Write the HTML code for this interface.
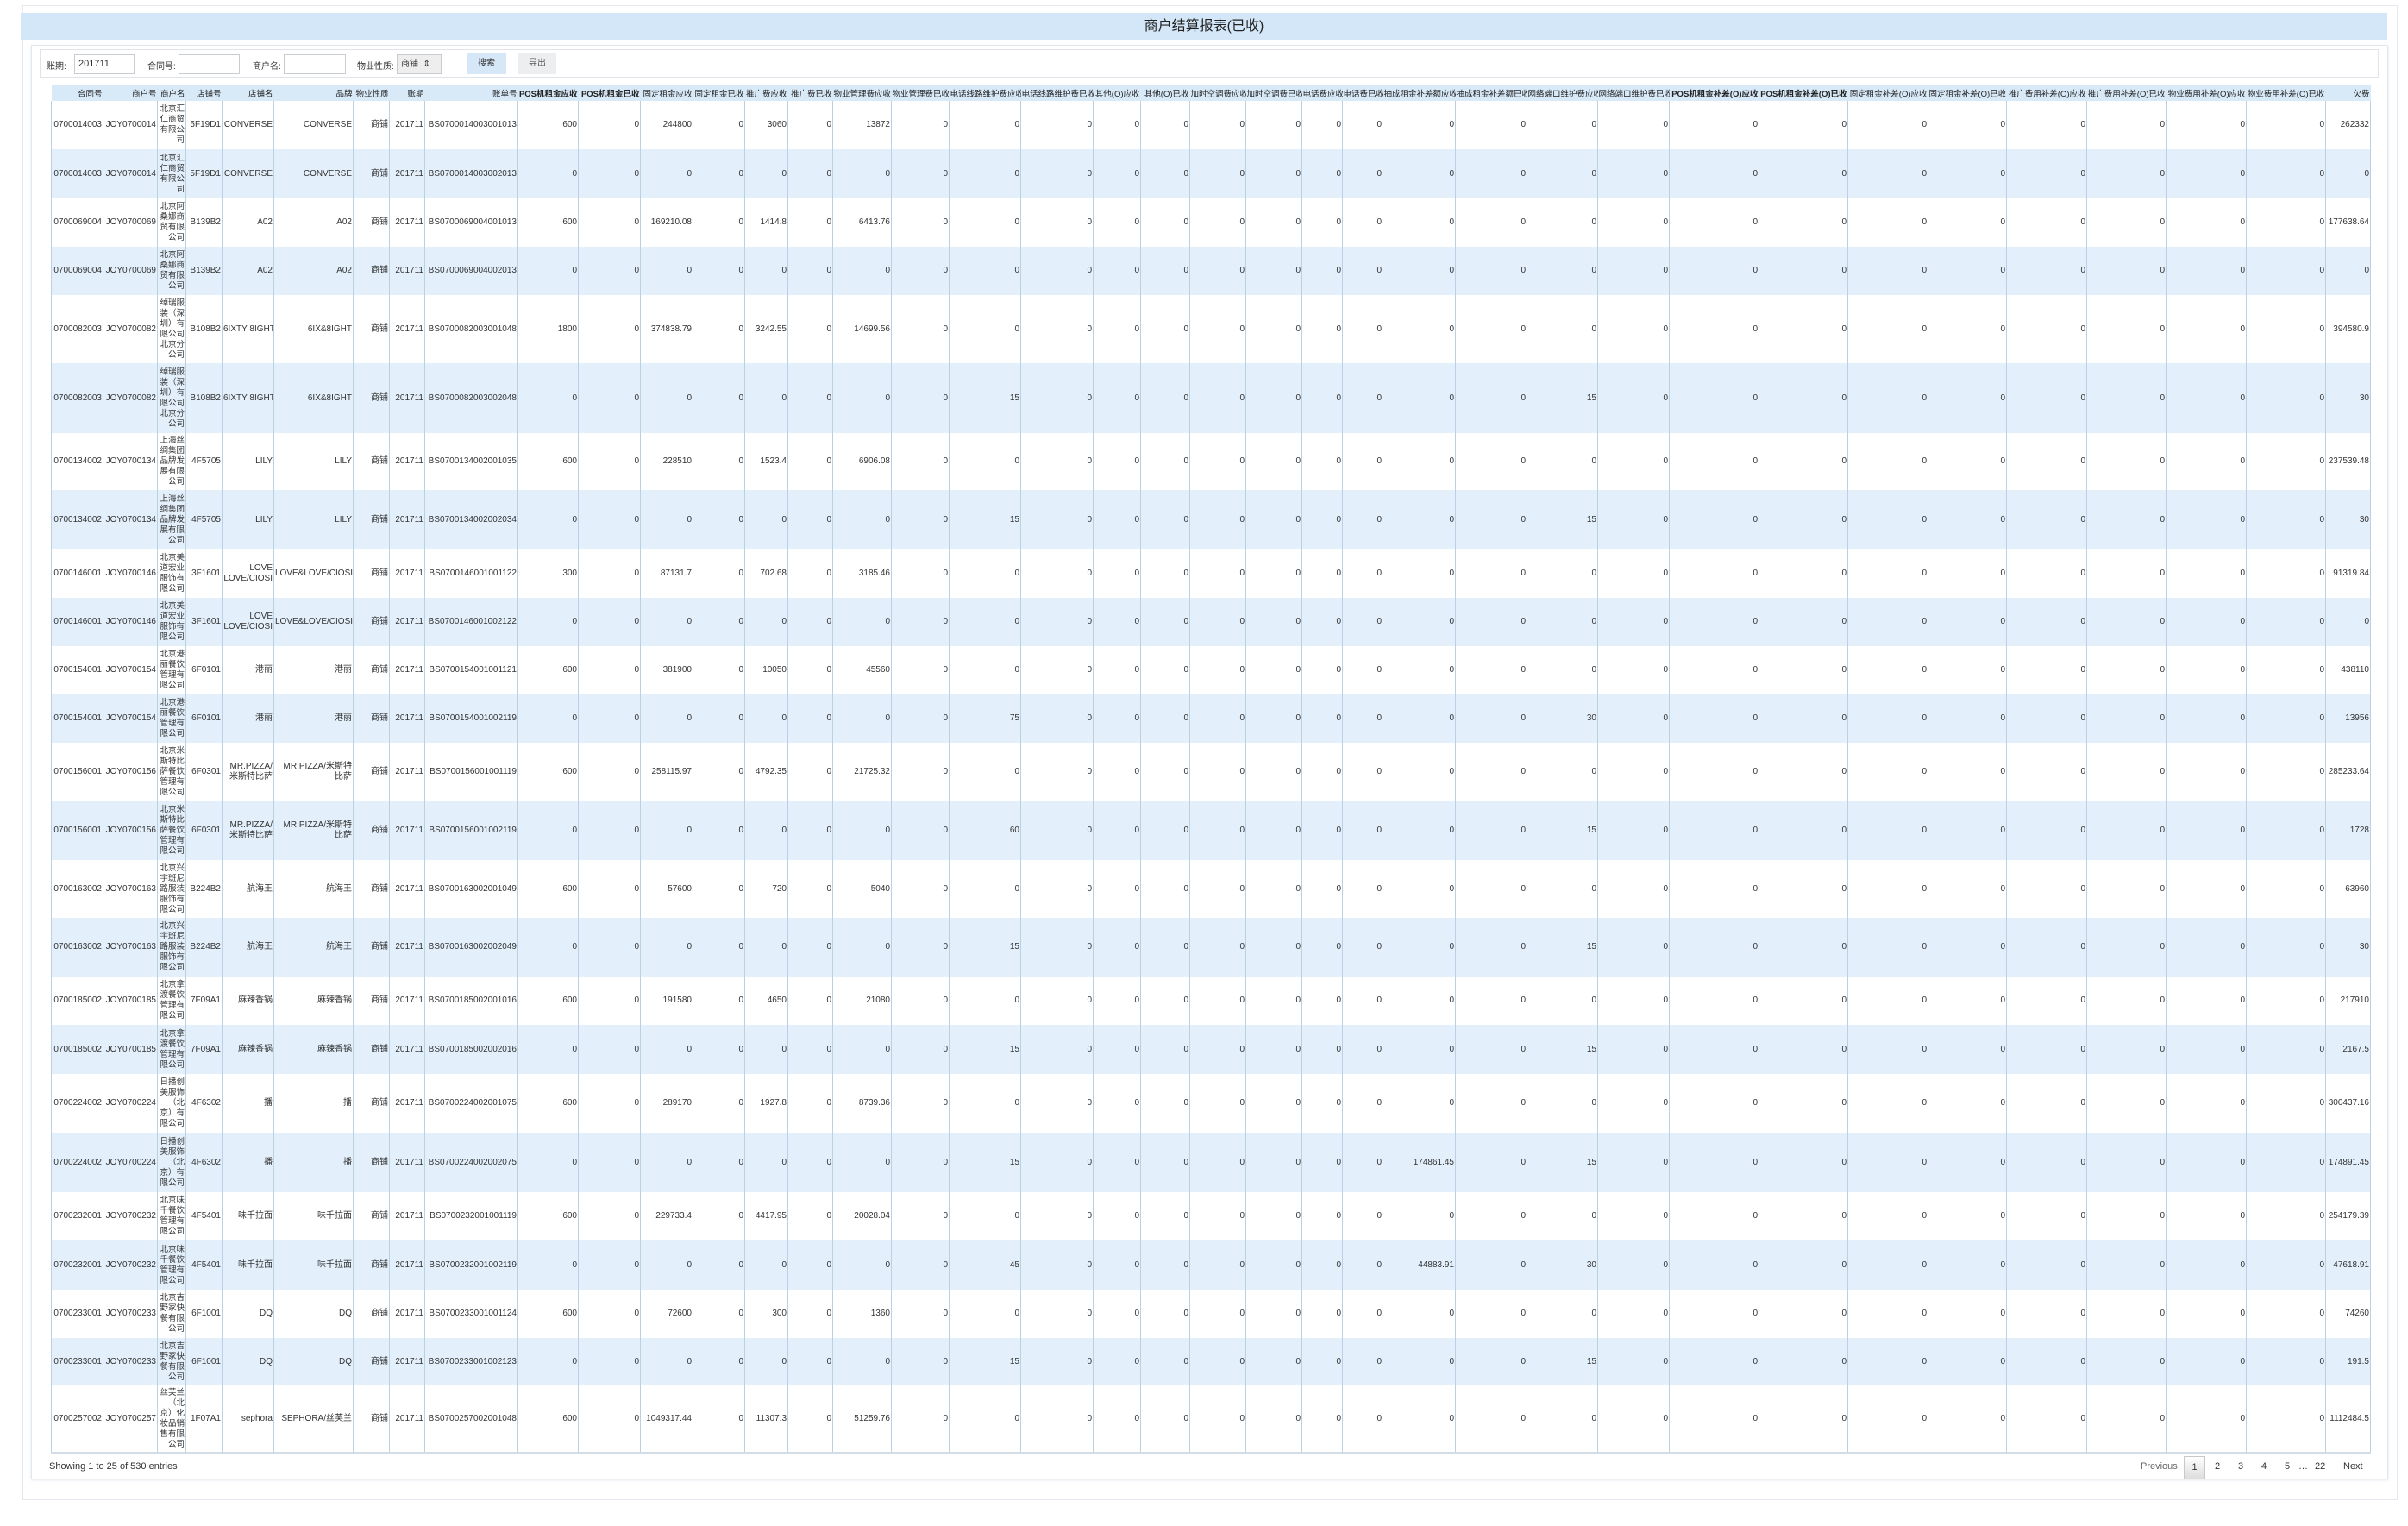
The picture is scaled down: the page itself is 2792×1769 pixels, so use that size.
<!DOCTYPE html>
<html><head><meta charset="utf-8"><style>
*{box-sizing:border-box;margin:0;padding:0}
body{width:2792px;height:1769px;background:#fff;font-family:"Liberation Sans","Noto Sans CJK SC",sans-serif;color:#333;position:relative;overflow:hidden}
.outer{position:absolute;left:26px;top:6px;width:2754px;height:1733px;border:1px solid #e4e9ef;background:#fff}
.title{position:absolute;left:24px;top:15px;width:2744px;height:31px;background:#d4e7f8;text-align:center;font-size:16px;line-height:31px;color:#222}
.inner{position:absolute;left:36px;top:52px;width:2733px;height:1663px;border:1px solid #e2e7ee;box-shadow:0 1px 3px #e4e8ee;background:#fff}
.filter{position:absolute;left:46px;top:57px;width:2712px;height:33px;border:1px solid #e0e4ea;background:#fff;font-size:10px}
.filter span,.filter div{position:absolute}
.inp{border:1px solid #c9ccd0;height:23px;top:5px;background:#fff;font-size:11px;line-height:21px;padding-left:4px}
.btn{top:4px;height:24px;line-height:24px;text-align:center;font-size:10px}
table{position:absolute;left:59px;top:98px;width:2689px;border-collapse:collapse;table-layout:fixed;font-size:10px}
th{height:19px;background:#d8e9f8;font-weight:normal;text-align:right;white-space:nowrap;overflow:hidden;padding:0 1px;font-size:9.5px;color:#222}
th.b{font-weight:bold}
td{text-align:right;padding:0 1px;border-left:1px solid #bcd0e3;border-right:1px solid #bcd0e3;white-space:nowrap;overflow:hidden;line-height:12px}
td.n{white-space:normal;word-break:break-all;font-size:9.5px;padding:0 1px}
td.w{white-space:normal}
tr.e td{background:#e3f0fc}
tbody tr:last-child td{border-bottom:2px solid #d4dde6}
.show{position:absolute;left:57px;top:1694px;font-size:11px}
.pg{position:absolute;top:1694px;font-size:11px;color:#333}
.cur{position:absolute;left:2532px;top:1688px;width:25px;height:27px;border:1px solid #c8c8c8;background:linear-gradient(#fff,#ddd);text-align:center;line-height:25px;font-size:11px}
</style></head><body>
<div class="outer"></div>
<div class="title">商户结算报表(已收)</div>
<div class="inner"></div>
<div class="filter">
<span style="left:7px;top:10px">账期:</span><div class="inp" style="left:39px;width:70px">201711</div>
<span style="left:124px;top:10px">合同号:</span><div class="inp" style="left:160px;width:71px"></div>
<span style="left:246px;top:10px">商户名:</span><div class="inp" style="left:282px;width:72px"></div>
<span style="left:367px;top:10px">物业性质:</span><div class="inp" style="left:413px;width:52px;background:#eee;font-size:10px">商铺 &nbsp;⇕</div>
<div class="btn" style="left:494px;width:46px;background:#d6e8f8">搜索</div>
<div class="btn" style="left:554px;width:44px;background:#eceeef;color:#555">导出</div>
</div>
<table>
<colgroup><col style="width:60px"><col style="width:63px"><col style="width:33px"><col style="width:42px"><col style="width:60px"><col style="width:92px"><col style="width:42px"><col style="width:41px"><col style="width:108px"><col style="width:70px"><col style="width:72px"><col style="width:61px"><col style="width:60px"><col style="width:50px"><col style="width:52px"><col style="width:68px"><col style="width:67px"><col style="width:83px"><col style="width:84px"><col style="width:55px"><col style="width:57px"><col style="width:65px"><col style="width:65px"><col style="width:47px"><col style="width:47px"><col style="width:84px"><col style="width:83px"><col style="width:82px"><col style="width:83px"><col style="width:104px"><col style="width:103px"><col style="width:93px"><col style="width:91px"><col style="width:93px"><col style="width:92px"><col style="width:93px"><col style="width:92px"><col style="width:52px"></colgroup>
<thead><tr><th>合同号</th><th>商户号</th><th>商户名</th><th>店铺号</th><th>店铺名</th><th>品牌</th><th>物业性质</th><th>账期</th><th>账单号</th><th class="b">POS机租金应收</th><th class="b">POS机租金已收</th><th>固定租金应收</th><th>固定租金已收</th><th>推广费应收</th><th>推广费已收</th><th>物业管理费应收</th><th>物业管理费已收</th><th>电话线路维护费应收</th><th>电话线路维护费已收</th><th>其他(O)应收</th><th>其他(O)已收</th><th>加时空调费应收</th><th>加时空调费已收</th><th>电话费应收</th><th>电话费已收</th><th>抽成租金补差额应收</th><th>抽成租金补差额已收</th><th>网络端口维护费应收</th><th>网络端口维护费已收</th><th class="b">POS机租金补差(O)应收</th><th class="b">POS机租金补差(O)已收</th><th>固定租金补差(O)应收</th><th>固定租金补差(O)已收</th><th>推广费用补差(O)应收</th><th>推广费用补差(O)已收</th><th>物业费用补差(O)应收</th><th>物业费用补差(O)已收</th><th>欠费</th></tr></thead>
<tbody>
<tr style="height:56px"><td>0700014003</td><td>JOY0700014</td><td class="n">北京汇仁商贸有限公司</td><td>5F19D1</td><td>CONVERSE</td><td>CONVERSE</td><td>商铺</td><td>201711</td><td>BS0700014003001013</td><td>600</td><td>0</td><td>244800</td><td>0</td><td>3060</td><td>0</td><td>13872</td><td>0</td><td>0</td><td>0</td><td>0</td><td>0</td><td>0</td><td>0</td><td>0</td><td>0</td><td>0</td><td>0</td><td>0</td><td>0</td><td>0</td><td>0</td><td>0</td><td>0</td><td>0</td><td>0</td><td>0</td><td>0</td><td>262332</td></tr>
<tr class="e" style="height:57px"><td>0700014003</td><td>JOY0700014</td><td class="n">北京汇仁商贸有限公司</td><td>5F19D1</td><td>CONVERSE</td><td>CONVERSE</td><td>商铺</td><td>201711</td><td>BS0700014003002013</td><td>0</td><td>0</td><td>0</td><td>0</td><td>0</td><td>0</td><td>0</td><td>0</td><td>0</td><td>0</td><td>0</td><td>0</td><td>0</td><td>0</td><td>0</td><td>0</td><td>0</td><td>0</td><td>0</td><td>0</td><td>0</td><td>0</td><td>0</td><td>0</td><td>0</td><td>0</td><td>0</td><td>0</td><td>0</td></tr>
<tr style="height:56px"><td>0700069004</td><td>JOY0700069</td><td class="n">北京阿桑娜商贸有限公司</td><td>B139B2</td><td>A02</td><td>A02</td><td>商铺</td><td>201711</td><td>BS0700069004001013</td><td>600</td><td>0</td><td>169210.08</td><td>0</td><td>1414.8</td><td>0</td><td>6413.76</td><td>0</td><td>0</td><td>0</td><td>0</td><td>0</td><td>0</td><td>0</td><td>0</td><td>0</td><td>0</td><td>0</td><td>0</td><td>0</td><td>0</td><td>0</td><td>0</td><td>0</td><td>0</td><td>0</td><td>0</td><td>0</td><td>177638.64</td></tr>
<tr class="e" style="height:56px"><td>0700069004</td><td>JOY0700069</td><td class="n">北京阿桑娜商贸有限公司</td><td>B139B2</td><td>A02</td><td>A02</td><td>商铺</td><td>201711</td><td>BS0700069004002013</td><td>0</td><td>0</td><td>0</td><td>0</td><td>0</td><td>0</td><td>0</td><td>0</td><td>0</td><td>0</td><td>0</td><td>0</td><td>0</td><td>0</td><td>0</td><td>0</td><td>0</td><td>0</td><td>0</td><td>0</td><td>0</td><td>0</td><td>0</td><td>0</td><td>0</td><td>0</td><td>0</td><td>0</td><td>0</td></tr>
<tr style="height:79px"><td>0700082003</td><td>JOY0700082</td><td class="n">绰瑞服装（深圳）有限公司北京分公司</td><td>B108B2</td><td>6IXTY 8IGHT</td><td>6IX&amp;8IGHT</td><td>商铺</td><td>201711</td><td>BS0700082003001048</td><td>1800</td><td>0</td><td>374838.79</td><td>0</td><td>3242.55</td><td>0</td><td>14699.56</td><td>0</td><td>0</td><td>0</td><td>0</td><td>0</td><td>0</td><td>0</td><td>0</td><td>0</td><td>0</td><td>0</td><td>0</td><td>0</td><td>0</td><td>0</td><td>0</td><td>0</td><td>0</td><td>0</td><td>0</td><td>0</td><td>394580.9</td></tr>
<tr class="e" style="height:81px"><td>0700082003</td><td>JOY0700082</td><td class="n">绰瑞服装（深圳）有限公司北京分公司</td><td>B108B2</td><td>6IXTY 8IGHT</td><td>6IX&amp;8IGHT</td><td>商铺</td><td>201711</td><td>BS0700082003002048</td><td>0</td><td>0</td><td>0</td><td>0</td><td>0</td><td>0</td><td>0</td><td>0</td><td>15</td><td>0</td><td>0</td><td>0</td><td>0</td><td>0</td><td>0</td><td>0</td><td>0</td><td>0</td><td>15</td><td>0</td><td>0</td><td>0</td><td>0</td><td>0</td><td>0</td><td>0</td><td>0</td><td>0</td><td>30</td></tr>
<tr style="height:66px"><td>0700134002</td><td>JOY0700134</td><td class="n">上海丝绸集团品牌发展有限公司</td><td>4F5705</td><td>LILY</td><td>LILY</td><td>商铺</td><td>201711</td><td>BS0700134002001035</td><td>600</td><td>0</td><td>228510</td><td>0</td><td>1523.4</td><td>0</td><td>6906.08</td><td>0</td><td>0</td><td>0</td><td>0</td><td>0</td><td>0</td><td>0</td><td>0</td><td>0</td><td>0</td><td>0</td><td>0</td><td>0</td><td>0</td><td>0</td><td>0</td><td>0</td><td>0</td><td>0</td><td>0</td><td>0</td><td>237539.48</td></tr>
<tr class="e" style="height:69px"><td>0700134002</td><td>JOY0700134</td><td class="n">上海丝绸集团品牌发展有限公司</td><td>4F5705</td><td>LILY</td><td>LILY</td><td>商铺</td><td>201711</td><td>BS0700134002002034</td><td>0</td><td>0</td><td>0</td><td>0</td><td>0</td><td>0</td><td>0</td><td>0</td><td>15</td><td>0</td><td>0</td><td>0</td><td>0</td><td>0</td><td>0</td><td>0</td><td>0</td><td>0</td><td>15</td><td>0</td><td>0</td><td>0</td><td>0</td><td>0</td><td>0</td><td>0</td><td>0</td><td>0</td><td>30</td></tr>
<tr style="height:56px"><td>0700146001</td><td>JOY0700146</td><td class="n">北京美道宏业服饰有限公司</td><td>3F1601</td><td class="w">LOVE LOVE/CIOSI</td><td>LOVE&amp;LOVE/CIOSI</td><td>商铺</td><td>201711</td><td>BS0700146001001122</td><td>300</td><td>0</td><td>87131.7</td><td>0</td><td>702.68</td><td>0</td><td>3185.46</td><td>0</td><td>0</td><td>0</td><td>0</td><td>0</td><td>0</td><td>0</td><td>0</td><td>0</td><td>0</td><td>0</td><td>0</td><td>0</td><td>0</td><td>0</td><td>0</td><td>0</td><td>0</td><td>0</td><td>0</td><td>0</td><td>91319.84</td></tr>
<tr class="e" style="height:56px"><td>0700146001</td><td>JOY0700146</td><td class="n">北京美道宏业服饰有限公司</td><td>3F1601</td><td class="w">LOVE LOVE/CIOSI</td><td>LOVE&amp;LOVE/CIOSI</td><td>商铺</td><td>201711</td><td>BS0700146001002122</td><td>0</td><td>0</td><td>0</td><td>0</td><td>0</td><td>0</td><td>0</td><td>0</td><td>0</td><td>0</td><td>0</td><td>0</td><td>0</td><td>0</td><td>0</td><td>0</td><td>0</td><td>0</td><td>0</td><td>0</td><td>0</td><td>0</td><td>0</td><td>0</td><td>0</td><td>0</td><td>0</td><td>0</td><td>0</td></tr>
<tr style="height:56px"><td>0700154001</td><td>JOY0700154</td><td class="n">北京港丽餐饮管理有限公司</td><td>6F0101</td><td>港丽</td><td>港丽</td><td>商铺</td><td>201711</td><td>BS0700154001001121</td><td>600</td><td>0</td><td>381900</td><td>0</td><td>10050</td><td>0</td><td>45560</td><td>0</td><td>0</td><td>0</td><td>0</td><td>0</td><td>0</td><td>0</td><td>0</td><td>0</td><td>0</td><td>0</td><td>0</td><td>0</td><td>0</td><td>0</td><td>0</td><td>0</td><td>0</td><td>0</td><td>0</td><td>0</td><td>438110</td></tr>
<tr class="e" style="height:56px"><td>0700154001</td><td>JOY0700154</td><td class="n">北京港丽餐饮管理有限公司</td><td>6F0101</td><td>港丽</td><td>港丽</td><td>商铺</td><td>201711</td><td>BS0700154001002119</td><td>0</td><td>0</td><td>0</td><td>0</td><td>0</td><td>0</td><td>0</td><td>0</td><td>75</td><td>0</td><td>0</td><td>0</td><td>0</td><td>0</td><td>0</td><td>0</td><td>0</td><td>0</td><td>30</td><td>0</td><td>0</td><td>0</td><td>0</td><td>0</td><td>0</td><td>0</td><td>0</td><td>0</td><td>13956</td></tr>
<tr style="height:67px"><td>0700156001</td><td>JOY0700156</td><td class="n">北京米斯特比萨餐饮管理有限公司</td><td>6F0301</td><td class="w">MR.PIZZA/米斯特比萨</td><td class="w">MR.PIZZA/米斯特比萨</td><td>商铺</td><td>201711</td><td>BS0700156001001119</td><td>600</td><td>0</td><td>258115.97</td><td>0</td><td>4792.35</td><td>0</td><td>21725.32</td><td>0</td><td>0</td><td>0</td><td>0</td><td>0</td><td>0</td><td>0</td><td>0</td><td>0</td><td>0</td><td>0</td><td>0</td><td>0</td><td>0</td><td>0</td><td>0</td><td>0</td><td>0</td><td>0</td><td>0</td><td>0</td><td>285233.64</td></tr>
<tr class="e" style="height:69px"><td>0700156001</td><td>JOY0700156</td><td class="n">北京米斯特比萨餐饮管理有限公司</td><td>6F0301</td><td class="w">MR.PIZZA/米斯特比萨</td><td class="w">MR.PIZZA/米斯特比萨</td><td>商铺</td><td>201711</td><td>BS0700156001002119</td><td>0</td><td>0</td><td>0</td><td>0</td><td>0</td><td>0</td><td>0</td><td>0</td><td>60</td><td>0</td><td>0</td><td>0</td><td>0</td><td>0</td><td>0</td><td>0</td><td>0</td><td>0</td><td>15</td><td>0</td><td>0</td><td>0</td><td>0</td><td>0</td><td>0</td><td>0</td><td>0</td><td>0</td><td>1728</td></tr>
<tr style="height:67px"><td>0700163002</td><td>JOY0700163</td><td class="n">北京兴宇斑尼路服装服饰有限公司</td><td>B224B2</td><td>航海王</td><td>航海王</td><td>商铺</td><td>201711</td><td>BS0700163002001049</td><td>600</td><td>0</td><td>57600</td><td>0</td><td>720</td><td>0</td><td>5040</td><td>0</td><td>0</td><td>0</td><td>0</td><td>0</td><td>0</td><td>0</td><td>0</td><td>0</td><td>0</td><td>0</td><td>0</td><td>0</td><td>0</td><td>0</td><td>0</td><td>0</td><td>0</td><td>0</td><td>0</td><td>0</td><td>63960</td></tr>
<tr class="e" style="height:68px"><td>0700163002</td><td>JOY0700163</td><td class="n">北京兴宇斑尼路服装服饰有限公司</td><td>B224B2</td><td>航海王</td><td>航海王</td><td>商铺</td><td>201711</td><td>BS0700163002002049</td><td>0</td><td>0</td><td>0</td><td>0</td><td>0</td><td>0</td><td>0</td><td>0</td><td>15</td><td>0</td><td>0</td><td>0</td><td>0</td><td>0</td><td>0</td><td>0</td><td>0</td><td>0</td><td>15</td><td>0</td><td>0</td><td>0</td><td>0</td><td>0</td><td>0</td><td>0</td><td>0</td><td>0</td><td>30</td></tr>
<tr style="height:56px"><td>0700185002</td><td>JOY0700185</td><td class="n">北京拿渡餐饮管理有限公司</td><td>7F09A1</td><td>麻辣香锅</td><td>麻辣香锅</td><td>商铺</td><td>201711</td><td>BS0700185002001016</td><td>600</td><td>0</td><td>191580</td><td>0</td><td>4650</td><td>0</td><td>21080</td><td>0</td><td>0</td><td>0</td><td>0</td><td>0</td><td>0</td><td>0</td><td>0</td><td>0</td><td>0</td><td>0</td><td>0</td><td>0</td><td>0</td><td>0</td><td>0</td><td>0</td><td>0</td><td>0</td><td>0</td><td>0</td><td>217910</td></tr>
<tr class="e" style="height:57px"><td>0700185002</td><td>JOY0700185</td><td class="n">北京拿渡餐饮管理有限公司</td><td>7F09A1</td><td>麻辣香锅</td><td>麻辣香锅</td><td>商铺</td><td>201711</td><td>BS0700185002002016</td><td>0</td><td>0</td><td>0</td><td>0</td><td>0</td><td>0</td><td>0</td><td>0</td><td>15</td><td>0</td><td>0</td><td>0</td><td>0</td><td>0</td><td>0</td><td>0</td><td>0</td><td>0</td><td>15</td><td>0</td><td>0</td><td>0</td><td>0</td><td>0</td><td>0</td><td>0</td><td>0</td><td>0</td><td>2167.5</td></tr>
<tr style="height:68px"><td>0700224002</td><td>JOY0700224</td><td class="n">日播创美服饰（北京）有限公司</td><td>4F6302</td><td>播</td><td>播</td><td>商铺</td><td>201711</td><td>BS0700224002001075</td><td>600</td><td>0</td><td>289170</td><td>0</td><td>1927.8</td><td>0</td><td>8739.36</td><td>0</td><td>0</td><td>0</td><td>0</td><td>0</td><td>0</td><td>0</td><td>0</td><td>0</td><td>0</td><td>0</td><td>0</td><td>0</td><td>0</td><td>0</td><td>0</td><td>0</td><td>0</td><td>0</td><td>0</td><td>0</td><td>300437.16</td></tr>
<tr class="e" style="height:69px"><td>0700224002</td><td>JOY0700224</td><td class="n">日播创美服饰（北京）有限公司</td><td>4F6302</td><td>播</td><td>播</td><td>商铺</td><td>201711</td><td>BS0700224002002075</td><td>0</td><td>0</td><td>0</td><td>0</td><td>0</td><td>0</td><td>0</td><td>0</td><td>15</td><td>0</td><td>0</td><td>0</td><td>0</td><td>0</td><td>0</td><td>0</td><td>174861.45</td><td>0</td><td>15</td><td>0</td><td>0</td><td>0</td><td>0</td><td>0</td><td>0</td><td>0</td><td>0</td><td>0</td><td>174891.45</td></tr>
<tr style="height:56px"><td>0700232001</td><td>JOY0700232</td><td class="n">北京味千餐饮管理有限公司</td><td>4F5401</td><td>味千拉面</td><td>味千拉面</td><td>商铺</td><td>201711</td><td>BS0700232001001119</td><td>600</td><td>0</td><td>229733.4</td><td>0</td><td>4417.95</td><td>0</td><td>20028.04</td><td>0</td><td>0</td><td>0</td><td>0</td><td>0</td><td>0</td><td>0</td><td>0</td><td>0</td><td>0</td><td>0</td><td>0</td><td>0</td><td>0</td><td>0</td><td>0</td><td>0</td><td>0</td><td>0</td><td>0</td><td>0</td><td>254179.39</td></tr>
<tr class="e" style="height:57px"><td>0700232001</td><td>JOY0700232</td><td class="n">北京味千餐饮管理有限公司</td><td>4F5401</td><td>味千拉面</td><td>味千拉面</td><td>商铺</td><td>201711</td><td>BS0700232001002119</td><td>0</td><td>0</td><td>0</td><td>0</td><td>0</td><td>0</td><td>0</td><td>0</td><td>45</td><td>0</td><td>0</td><td>0</td><td>0</td><td>0</td><td>0</td><td>0</td><td>44883.91</td><td>0</td><td>30</td><td>0</td><td>0</td><td>0</td><td>0</td><td>0</td><td>0</td><td>0</td><td>0</td><td>0</td><td>47618.91</td></tr>
<tr style="height:56px"><td>0700233001</td><td>JOY0700233</td><td class="n">北京吉野家快餐有限公司</td><td>6F1001</td><td>DQ</td><td>DQ</td><td>商铺</td><td>201711</td><td>BS0700233001001124</td><td>600</td><td>0</td><td>72600</td><td>0</td><td>300</td><td>0</td><td>1360</td><td>0</td><td>0</td><td>0</td><td>0</td><td>0</td><td>0</td><td>0</td><td>0</td><td>0</td><td>0</td><td>0</td><td>0</td><td>0</td><td>0</td><td>0</td><td>0</td><td>0</td><td>0</td><td>0</td><td>0</td><td>0</td><td>74260</td></tr>
<tr class="e" style="height:55px"><td>0700233001</td><td>JOY0700233</td><td class="n">北京吉野家快餐有限公司</td><td>6F1001</td><td>DQ</td><td>DQ</td><td>商铺</td><td>201711</td><td>BS0700233001002123</td><td>0</td><td>0</td><td>0</td><td>0</td><td>0</td><td>0</td><td>0</td><td>0</td><td>15</td><td>0</td><td>0</td><td>0</td><td>0</td><td>0</td><td>0</td><td>0</td><td>0</td><td>0</td><td>15</td><td>0</td><td>0</td><td>0</td><td>0</td><td>0</td><td>0</td><td>0</td><td>0</td><td>0</td><td>191.5</td></tr>
<tr style="height:78px"><td>0700257002</td><td>JOY0700257</td><td class="n">丝芙兰（北京）化妆品销售有限公司</td><td>1F07A1</td><td>sephora</td><td>SEPHORA/丝芙兰</td><td>商铺</td><td>201711</td><td>BS0700257002001048</td><td>600</td><td>0</td><td>1049317.44</td><td>0</td><td>11307.3</td><td>0</td><td>51259.76</td><td>0</td><td>0</td><td>0</td><td>0</td><td>0</td><td>0</td><td>0</td><td>0</td><td>0</td><td>0</td><td>0</td><td>0</td><td>0</td><td>0</td><td>0</td><td>0</td><td>0</td><td>0</td><td>0</td><td>0</td><td>0</td><td>1112484.5</td></tr>
</tbody></table>
<div class="show">Showing 1 to 25 of 530 entries</div>
<span class="pg" style="left:2482px;color:#666">Previous</span>
<div class="cur">1</div>
<span class="pg" style="left:2568px">2</span>
<span class="pg" style="left:2595px">3</span>
<span class="pg" style="left:2622px">4</span>
<span class="pg" style="left:2649px">5</span>
<span class="pg" style="left:2665px">…</span>
<span class="pg" style="left:2684px">22</span>
<span class="pg" style="left:2717px">Next</span>
</body></html>
